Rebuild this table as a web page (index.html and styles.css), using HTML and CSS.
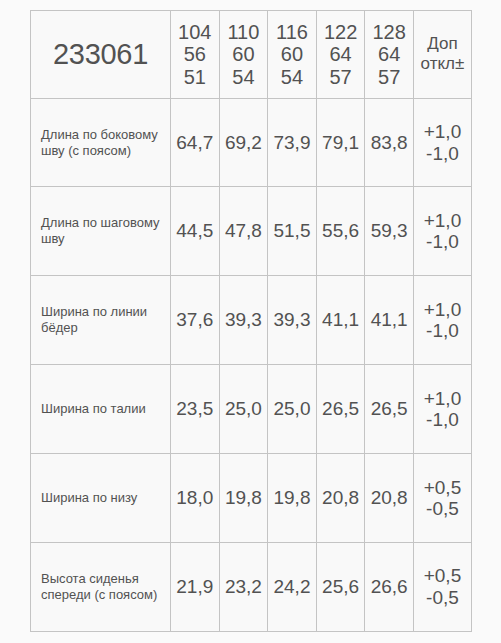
FILE: index.html
```html
<!DOCTYPE html>
<html lang="ru">
<head>
<meta charset="utf-8">
<title>233061</title>
<link rel="stylesheet" href="styles.css">
</head>
<body>
<table class="sizes">
  <colgroup>
    <col class="c-label"><col class="c-size"><col class="c-size"><col class="c-size"><col class="c-size"><col class="c-size"><col class="c-tol">
  </colgroup>
  <tr class="head">
    <th class="model">233061</th>
    <th class="size">104<br>56<br>51</th>
    <th class="size">110<br>60<br>54</th>
    <th class="size">116<br>60<br>54</th>
    <th class="size">122<br>64<br>57</th>
    <th class="size">128<br>64<br>57</th>
    <th class="tolh">Доп<br>откл±</th>
  </tr>
  <tr>
    <td class="label">Длина по боковому<br>шву (с поясом)</td>
    <td class="num">64,7</td><td class="num">69,2</td><td class="num">73,9</td><td class="num">79,1</td><td class="num">83,8</td>
    <td class="tol">+1,0<br>-1,0</td>
  </tr>
  <tr>
    <td class="label">Длина по шаговому<br>шву</td>
    <td class="num">44,5</td><td class="num">47,8</td><td class="num">51,5</td><td class="num">55,6</td><td class="num">59,3</td>
    <td class="tol">+1,0<br>-1,0</td>
  </tr>
  <tr>
    <td class="label">Ширина по линии<br>бёдер</td>
    <td class="num">37,6</td><td class="num">39,3</td><td class="num">39,3</td><td class="num">41,1</td><td class="num">41,1</td>
    <td class="tol">+1,0<br>-1,0</td>
  </tr>
  <tr>
    <td class="label">Ширина по талии</td>
    <td class="num">23,5</td><td class="num">25,0</td><td class="num">25,0</td><td class="num">26,5</td><td class="num">26,5</td>
    <td class="tol">+1,0<br>-1,0</td>
  </tr>
  <tr>
    <td class="label">Ширина по низу</td>
    <td class="num">18,0</td><td class="num">19,8</td><td class="num">19,8</td><td class="num">20,8</td><td class="num">20,8</td>
    <td class="tol">+0,5<br>-0,5</td>
  </tr>
  <tr>
    <td class="label">Высота сиденья<br>спереди (с поясом)</td>
    <td class="num">21,9</td><td class="num">23,2</td><td class="num">24,2</td><td class="num">25,6</td><td class="num">26,6</td>
    <td class="tol">+0,5<br>-0,5</td>
  </tr>
</table>
</body>
</html>
```
FILE: styles.css
```css
html, body {
  margin: 0;
  padding: 0;
  background: #fafafa;
}
body {
  padding: 10px 0 0 30px;
  font-family: "Liberation Sans", Arial, sans-serif;
  color: #525252;
}
.sizes {
  border-collapse: collapse;
  table-layout: fixed;
  width: 441px;
  background: #f9f9f9;
}
.c-label { width: 140px; }
.c-size { width: 48.6px; }
.c-tol { width: 58px; }
.sizes th, .sizes td {
  border: 1px solid #c4c4c4;
  padding: 0;
  height: 87.9px;
  text-align: center;
  vertical-align: middle;
  font-weight: normal;
}
.sizes .head th {
  height: 86.6px;
}
.model {
  font-size: 29px;
  letter-spacing: -0.3px;
}
.size {
  font-size: 20px;
  line-height: 22.5px;
}
.tolh {
  font-size: 17px;
  line-height: 20px;
}
.label {
  text-align: left !important;
  padding-left: 10px !important;
  font-size: 13px;
  line-height: 16px;
}
.num {
  font-size: 19px;
}
.tol {
  font-size: 19px;
  line-height: 21.5px;
}
```
